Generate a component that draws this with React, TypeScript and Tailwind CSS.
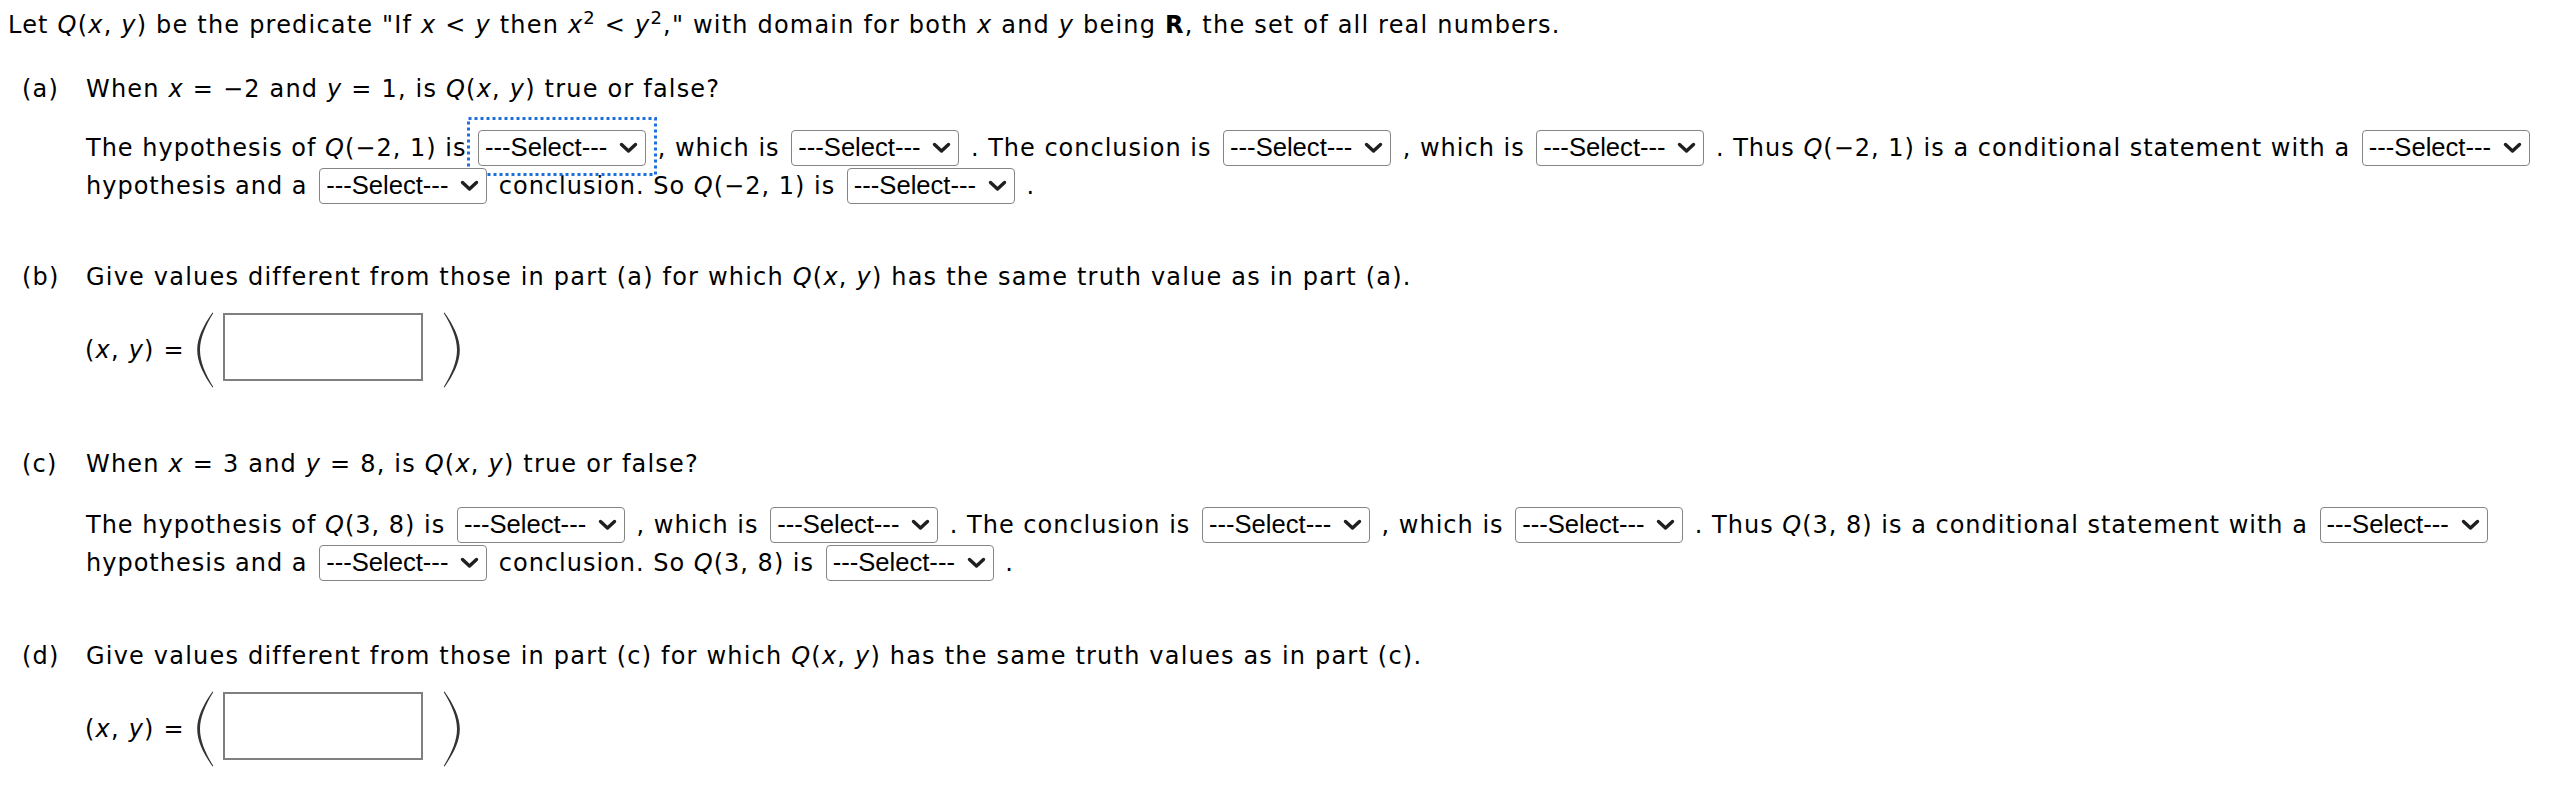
import React from 'react';

function Sel({ focused = false }: { focused?: boolean }) {
  return (
    <span className="relative mx-[3px] inline-flex h-[36px] w-[168px] items-center justify-between rounded-[4px] border border-[#858585] bg-white pl-[6px] pr-[7px] align-baseline font-['Liberation_Sans',Arial,sans-serif] text-[25.6px] leading-none tracking-normal text-black">
      <span>---Select---</span>
      <svg width="19" height="12" viewBox="0 0 19 12" className="shrink-0">
        <polyline points="2.5,2.5 9.5,9 16.5,2.5" fill="none" stroke="#1f1f1f" strokeWidth="3.4" strokeLinecap="round" strokeLinejoin="round" />
      </svg>
      {focused && (
        <svg width="190" height="59" viewBox="0 0 190 59" className="pointer-events-none absolute -left-[12px] -top-[14px]">
          <rect x="1.5" y="1.5" width="187" height="56" fill="none" stroke="#1d6fdc" strokeWidth="3" strokeDasharray="3 3" />
        </svg>
      )}
    </span>
  );
}

function Paren({ right = false }: { right?: boolean }) {
  return (
    <svg width="18" height="76" viewBox="0 0 18 76" className={right ? 'block shrink-0 -scale-x-100' : 'block shrink-0'}>
      <path
        d="M16.5 0.5 C 7 14, 1.2 26, 1.2 38 C 1.2 50, 7 62, 16.5 75.5 L 17.3 75 C 9.5 62, 4 50, 4 38 C 4 26, 9.5 14, 17.3 1 Z"
        fill="#333333"
      />
    </svg>
  );
}

function Answer() {
  return (
    <div className="flex items-center pl-[77px]">
      <span>
        (<i>x</i>, <i>y</i>) =
      </span>
      <div className="ml-[11px]">
        <Paren />
      </div>
      <div className="mb-[6px] ml-[9px] h-[68px] w-[200px] border-2 border-[#7f7f7f] bg-white" />
      <div className="ml-[20px]">
        <Paren right />
      </div>
    </div>
  );
}

function Part({ label, children }: { label: string; children: React.ReactNode }) {
  return (
    <div className="flex pl-[14px]">
      <span className="w-[64px] shrink-0">{label}</span>
      <span>{children}</span>
    </div>
  );
}

export default function App() {
  return (
    <div className="min-h-[810px] w-[2560px] bg-white pl-[8px] pt-[6px] font-['DejaVu_Sans',Verdana,sans-serif] text-[24px] leading-[38px] tracking-[1.2px] text-black">
      <p>
        Let <i>Q</i>(<i>x</i>, <i>y</i>) be the predicate "If <i>x</i> &lt; <i>y</i> then <i>x</i>
        <sup>2</sup> &lt; <i>y</i>
        <sup>2</sup>," with domain for both <i>x</i> and <i>y</i> being <b>R</b>, the set of all real numbers.
      </p>

      {/* (a) */}
      <div className="mt-[26px]">
        <Part label="(a)">
          When <i>x</i> = −2 and <i>y</i> = 1, is <i>Q</i>(<i>x</i>, <i>y</i>) true or false?
        </Part>
      </div>
      <p className="mt-[21px] pl-[78px] tracking-[1px]">
        The hypothesis of <i>Q</i>(−2, 1) is <Sel focused /> , which is <Sel /> . The conclusion is <Sel /> , which is{' '}
        <Sel /> . Thus <i>Q</i>(−2, 1) is a conditional statement with a <Sel /> hypothesis and a <Sel /> conclusion. So{' '}
        <i>Q</i>(−2, 1) is <Sel /> .
      </p>

      {/* (b) */}
      <div className="mt-[53px]">
        <Part label="(b)">
          Give values different from those in part (a) for which <i>Q</i>(<i>x</i>, <i>y</i>) has the same truth value as in
          part (a).
        </Part>
      </div>
      <div className="mt-[16px]">
        <Answer />
      </div>

      {/* (c) */}
      <div className="mt-[57px]">
        <Part label="(c)">
          When <i>x</i> = 3 and <i>y</i> = 8, is <i>Q</i>(<i>x</i>, <i>y</i>) true or false?
        </Part>
      </div>
      <p className="mt-[23px] pl-[78px] tracking-[1px]">
        The hypothesis of <i>Q</i>(3, 8) is <Sel /> , which is <Sel /> . The conclusion is <Sel /> , which is <Sel /> .
        Thus <i>Q</i>(3, 8) is a conditional statement with a <Sel /> hypothesis and a <Sel /> conclusion. So{' '}
        <i>Q</i>(3, 8) is <Sel /> .
      </p>

      {/* (d) */}
      <div className="mt-[55px]">
        <Part label="(d)">
          Give values different from those in part (c) for which <i>Q</i>(<i>x</i>, <i>y</i>) has the same truth values as in
          part (c).
        </Part>
      </div>
      <div className="mt-[16px]">
        <Answer />
      </div>
    </div>
  );
}
